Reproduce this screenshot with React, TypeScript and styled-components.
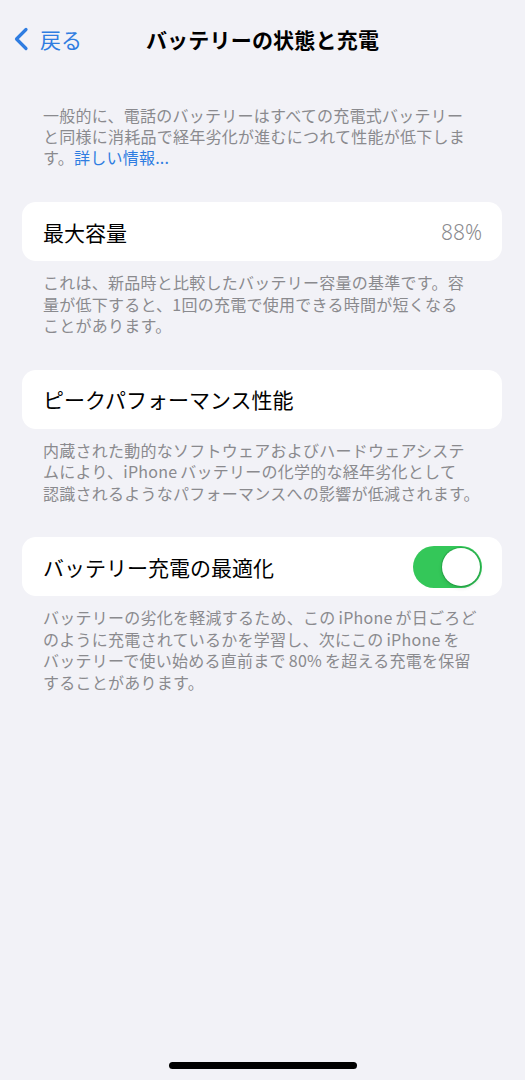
import React, { ReactElement, useState } from 'react';
import styled, { createGlobalStyle } from "styled-components";

const GlobalStyle = createGlobalStyle`
  html, body {
    margin: 0;
    padding: 0;
    background: #f2f2f7;
  }
  body {
    font-family: "Noto Sans CJK JP", "Noto Sans", "Liberation Sans", sans-serif;
    -webkit-font-smoothing: antialiased;
  }
`

export default function App(): ReactElement {
  const [optimized, setOptimized] = useState(true);

  return (
    <>
      <GlobalStyle />
      <Page>
        <NavBar>
          <BackButton>
            <svg width="18" height="24" viewBox="0 0 18 24" fill="none">
              <path d="M14 2.5 L4.5 12 L14 21.5" stroke="#2f7de1" strokeWidth="3.2" strokeLinecap="round" strokeLinejoin="round" />
            </svg>
            <BackText>戻る</BackText>
          </BackButton>
          <Title>バッテリーの状態と充電</Title>
          <div />
        </NavBar>

        <Content>
          <Intro>
            一般的に、電話のバッテリーはすべての充電式バッテリー<br />
            と同様に消耗品で経年劣化が進むにつれて性能が低下しま<br />
            す。<MoreLink>詳しい情報...</MoreLink>
          </Intro>

          <Section>
            <Card>
              <Label>最大容量</Label>
              <Value>88%</Value>
            </Card>
            <Footer>
              これは、新品時と比較したバッテリー容量の基準です。容<br />
              量が低下すると、1回の充電で使用できる時間が短くなる<br />
              ことがあります。
            </Footer>
          </Section>

          <Section>
            <Card>
              <Label>ピークパフォーマンス性能</Label>
            </Card>
            <Footer>
              内蔵された動的なソフトウェアおよびハードウェアシステ<br />
              ムにより、iPhone<Gap />バッテリーの化学的な経年劣化として<br />
              認識されるようなパフォーマンスへの影響が低減されます。
            </Footer>
          </Section>

          <Section>
            <Card>
              <Label>バッテリー充電の最適化</Label>
              <Toggle on={optimized} onClick={() => setOptimized(!optimized)}>
                <Knob />
              </Toggle>
            </Card>
            <Footer>
              バッテリーの劣化を軽減するため、この<Gap />iPhone<Gap />が日ごろど<br />
              のように充電されているかを学習し、次にこの<Gap />iPhone<Gap />を<br />
              バッテリーで使い始める直前まで<Gap />80%<Gap />を超える充電を保留<br />
              することがあります。
            </Footer>
          </Section>
        </Content>

        <HomeIndicator />
      </Page>
    </>
  );
}

const Page = styled.div`
  display: flex;
  flex-direction: column;
  min-height: 100vh;
  background: #f2f2f7;
`

const NavBar = styled.div`
  display: grid;
  grid-template-columns: 1fr auto 1fr;
  align-items: center;
  height: 78px;
  padding: 0 12px;
`

const BackButton = styled.div`
  display: flex;
  align-items: center;
  gap: 10px;
`

const BackText = styled.span`
  font-size: 21px;
  color: #2f7de1;
  line-height: 24px;
`

const Title = styled.div`
  font-size: 21px;
  font-weight: 700;
  color: #000000;
  letter-spacing: 0.2px;
`

const Content = styled.div`
  display: flex;
  flex-direction: column;
  padding: 27px 23px 0 22px;
  gap: 33px;
`

const Intro = styled.div`
  padding: 0 21px;
  font-size: 16px;
  line-height: 21px;
  letter-spacing: 0.25px;
  color: #8a8a8e;
  white-space: nowrap;
  margin-bottom: 1px;
`

const MoreLink = styled.span`
  color: #2f7de1;
`

const Gap = styled.span`
  display: inline-block;
  width: 3px;
`

const Section = styled.div`
  display: flex;
  flex-direction: column;
`

const Card = styled.div`
  display: flex;
  align-items: center;
  justify-content: space-between;
  height: 59px;
  padding: 0 20px 0 21px;
  background: #ffffff;
  border-radius: 14px;
`

const Label = styled.span`
  font-size: 21px;
  color: #000000;
`

const Value = styled.span`
  font-family: "Noto Sans", "Liberation Sans", sans-serif;
  font-size: 21px;
  font-weight: 300;
  color: #8a8a8e;
`

const Toggle = styled.button<{ on: boolean }>`
  display: flex;
  align-items: center;
  justify-content: ${props => props.on ? "flex-end" : "flex-start"};
  width: 69px;
  height: 42px;
  padding: 2px;
  border: none;
  border-radius: 21px;
  background: ${props => props.on ? "#34c759" : "#e9e9eb"};
  cursor: pointer;
`

const Knob = styled.span`
  width: 38px;
  height: 38px;
  border-radius: 50%;
  background: #ffffff;
  box-shadow: 0 0 0 1px rgba(0, 100, 30, 0.25), 0 2px 4px rgba(0, 0, 0, 0.12);
`

const Footer = styled.div`
  margin-top: 11px;
  padding: 0 21px;
  font-size: 16px;
  line-height: 21.5px;
  letter-spacing: 0.25px;
  color: #8a8a8e;
  white-space: nowrap;
`

const HomeIndicator = styled.div`
  align-self: center;
  margin-top: auto;
  margin-bottom: 11px;
  width: 188px;
  height: 7px;
  border-radius: 4px;
  background: #000000;
`
